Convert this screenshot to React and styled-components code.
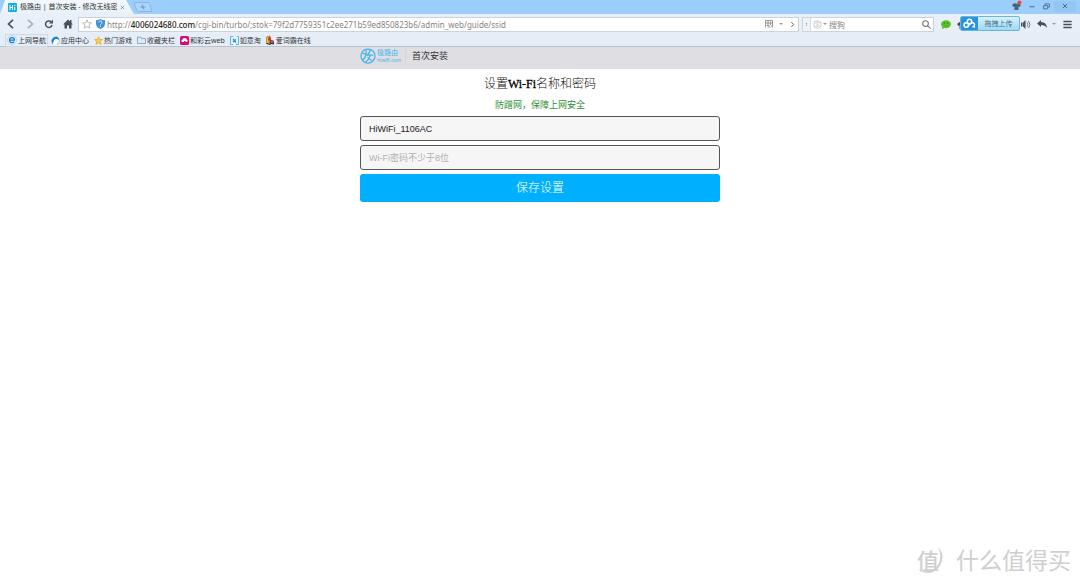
import styled, { createGlobalStyle } from 'styled-components';

const UI_FONT = "'Noto Sans', 'Noto Sans CJK SC', sans-serif";
const BODY_FONT = "'Liberation Sans', 'Noto Sans CJK SC', sans-serif";
const SERIF_FONT = "'Liberation Serif', 'Noto Sans CJK SC', serif";

const GlobalStyle = createGlobalStyle`
  * {
    box-sizing: border-box;
  }

  body {
    margin: 0;
    background: #fff;
    font-family: ${UI_FONT};
  }

  button,
  input {
    min-width: 0;
    margin: 0;
    padding: 0;
    border: 0;
    background: none;
    color: inherit;
    font-family: inherit;
  }

  svg {
    display: block;
    flex: none;
    overflow: visible;
  }
`;

const Page = styled.div`
  display: flex;
  flex-direction: column;
  min-height: 100vh;
`;

/* ---------- browser window ---------- */

const TitleBar = styled.div`
  display: flex;
  height: 14px;
  background: #9bcefb;
`;

const Tab = styled.div`
  display: flex;
  align-items: center;
  width: 134px;
  padding: 0 9px 0 8px;
  gap: 3px;
  background: linear-gradient(#f3f9fe, #e8f1f9);
  clip-path: polygon(5px 0, 126px 0, 100% 100%, 0 100%);
  color: #333;
  font-size: 7px;
  line-height: 14px;
`;

const TabTitle = styled.span`
  flex: 1;
  overflow: hidden;
  white-space: nowrap;
`;

const NewTab = styled.button`
  display: flex;
  align-items: center;
  justify-content: center;
  width: 16px;
  height: 10px;
  margin: 2px 0 0 1px;
  border: 1px solid #86b7e2;
  border-radius: 2px;
  background: #aad5fb;
  color: #6590b8;
  transform: skewX(20deg);
`;

const WindowButtons = styled.div`
  display: flex;
  align-items: center;
  height: 12px;
  margin-left: auto;
  padding-right: 4px;
  color: #4c6a88;
`;

const WindowButton = styled.button`
  display: flex;
  align-items: center;
  justify-content: center;
  width: ${({ $width }) => $width || 15}px;
  height: 11px;
  background: ${({ $shaded }) => ($shaded ? '#94c6f4' : 'none')};
`;

const Toolbar = styled.div`
  display: flex;
  align-items: center;
  height: 20px;
  padding: 0 2px 0 1px;
  background: linear-gradient(#e8f1f9, #e6eef7);
  color: #4a4f55;
`;

const ToolButton = styled.button`
  display: flex;
  align-items: center;
  justify-content: center;
  flex: none;
  width: ${({ $width }) => $width || 19}px;
  height: 16px;
  color: ${({ $muted }) => ($muted ? '#a9afb6' : 'inherit')};
`;

const AddressBar = styled.div`
  display: flex;
  align-items: center;
  flex: 1;
  min-width: 0;
  height: 15px;
  margin-left: 1px;
  border: 1px solid #ccd3db;
  background: #fff;
`;

const Address = styled.div`
  flex: 1;
  min-width: 0;
  overflow: hidden;
  padding-left: 1px;
  color: #858585;
  font-size: 8px;
  line-height: 13px;
  white-space: nowrap;

  b {
    color: #222;
    font-weight: 500;
  }
`;

const SearchBar = styled.label`
  display: flex;
  align-items: center;
  width: 132px;
  height: 15px;
  margin: 0 3px;
  border: 1px solid #ccd3db;
  background: #fff;
  color: #777;
`;

const SearchGrip = styled.span`
  display: flex;
  align-items: center;
  justify-content: center;
  width: 8px;
  height: 13px;
  border-right: 1px solid #d8dee5;
  background: #edf3f9;
`;

const SearchInput = styled.input`
  flex: 1;
  padding-left: 2px;
  font-size: 8px;
  line-height: 13px;

  &::placeholder {
    color: #888;
  }
`;

const UploadAnchor = styled.div`
  position: relative;
  width: 65px;
  height: 16px;
  padding: 5px 0 0 2px;
`;

const UploadButton = styled.button`
  position: absolute;
  top: 0;
  right: 0;
  display: flex;
  width: 60px;
  height: 15px;
  overflow: hidden;
  border: 1px solid #6bb4dc;
  border-radius: 2px;
  background: linear-gradient(#d8f1fb, #9fd8f2);
  color: #41718f;
  font-size: 7px;
  line-height: 13px;
`;

const UploadLogo = styled.span`
  display: flex;
  align-items: center;
  justify-content: center;
  width: 17px;
  height: 13px;
  background: #2795dd;
`;

const UploadText = styled.span`
  flex: 1;
`;

const Bookmarks = styled.nav`
  display: flex;
  align-items: center;
  height: 13px;
  padding: 0 6px;
  gap: 3px;
  border-bottom: 1px solid #b9c1c9;
  background: #e5eef7;
`;

const Bookmark = styled.a`
  display: flex;
  align-items: center;
  gap: 1px;
  padding: 0 1px;
  outline: ${({ $active }) => ($active ? '1px solid #d0dae4' : 'none')};
  color: #333;
  font-size: 7px;
  line-height: 11px;
  text-decoration: none;
  white-space: nowrap;
`;

/* ---------- router page ---------- */

const Header = styled.header`
  height: 22px;
  background: #dfdee3;
`;

const Column = styled.div`
  width: 100%;
  max-width: 360px;
  margin: 0 auto;
`;

const HeaderRow = styled(Column)`
  display: flex;
  align-items: center;
  height: 18px;
`;

const Brand = styled.a`
  display: flex;
  align-items: center;
  gap: 1px;
  padding-right: 4px;
  border-right: 1px solid #d5d5db;
  color: #42b6ea;
  text-decoration: none;
`;

const BrandName = styled.span`
  display: flex;
  flex-direction: column;
  font-size: 7px;
  line-height: 8px;

  small {
    font-size: 5px;
    line-height: 6px;
  }
`;

const HeaderTitle = styled.span`
  padding-left: 6px;
  color: #333;
  font-size: 9px;
  line-height: 18px;
`;

const Main = styled.main`
  flex: 1;
`;

const SetupForm = styled.form`
  display: flex;
  flex-direction: column;
  padding-top: 6px;
  text-align: center;
`;

const Title = styled.h1`
  margin: 0;
  color: #111;
  font-family: ${SERIF_FONT};
  font-size: 12px;
  font-weight: 300;
  line-height: 18px;
`;

const Latin = styled.span`
  color: #000;
  font-weight: 400;
  -webkit-text-stroke: 0.3px;
`;

const Hint = styled.p`
  margin: 3px 0 1px;
  color: #2f8f35;
  font-family: ${BODY_FONT};
  font-size: 9px;
  line-height: 19px;
`;

const Field = styled.input`
  height: 25px;
  margin-bottom: 4px;
  padding: 0 8px;
  border: 1px solid #555;
  border-radius: 3px;
  background: #f6f6f6;
  color: #222;
  font-family: ${BODY_FONT};
  font-size: 9px;

  &::placeholder {
    color: #b0b0b0;
  }
`;

const SaveButton = styled.button`
  height: 28px;
  padding-bottom: 2px;
  border-radius: 3px;
  background: #00b0ff;
  color: #fff;
  font-family: ${SERIF_FONT};
  font-size: 12px;
  font-weight: 300;
`;

const Watermark = styled.footer`
  display: flex;
  align-items: center;
  justify-content: flex-end;
  gap: 12px;
  padding: 0 9px 9px 0;
  color: #cfcfcf;
  font-family: 'Noto Sans CJK SC', sans-serif;
  font-size: 23px;
  line-height: 34px;
`;

const Seal = styled.span`
  position: relative;
  width: 30px;
  font-size: 22px;
  font-weight: 500;
  line-height: 30px;
  padding-left: 3px;

  svg {
    position: absolute;
    top: 0;
    left: 0;
  }
`;

/* ---------- icons ---------- */

const Stroke = ({ d, size = 10, width = 2 }) => (
  <svg
    width={size}
    height={size}
    viewBox="0 0 24 24"
    fill="none"
    stroke="currentColor"
    strokeWidth={width}
    aria-hidden="true"
  >
    <path d={d} />
  </svg>
);

const Star = ({ fill, stroke, size = 10 }) => (
  <svg width={size} height={size} viewBox="0 0 24 24" aria-hidden="true">
    <path
      d="M12 2l3 7 7.500.6-5.700 5 1.800 7.400-6.600-4-6.600 4 1.800-7.400-5.700-5L9 9z"
      fill={fill}
      stroke={stroke}
      strokeWidth="2"
      strokeLinejoin="round"
    />
  </svg>
);

const Caret = () => (
  <svg width="4" height="2" viewBox="0 0 4 2" aria-hidden="true">
    <path d="M0 0h4L2 2z" fill="#999" />
  </svg>
);

const SiteIcon = () => (
  <svg width="9" height="9" viewBox="0 0 18 18" aria-hidden="true">
    <rect width="18" height="18" rx="2" fill="#12b0e8" />
    <path
      d="M4 4v10M4 9h5M9 4v10M13.500 8v6M13.500 4v2"
      stroke="#fff"
      strokeWidth="2"
    />
  </svg>
);

const HomeIcon = () => (
  <svg width="10" height="10" viewBox="0 0 20 20" aria-hidden="true">
    <path
      d="M10 1L0 11h3v8h5v-6h4v6h5v-8h3l-3-3V2h-3v3z"
      fill="currentColor"
    />
  </svg>
);

const ReloadIcon = () => (
  <svg width="10" height="10" viewBox="0 0 20 20" aria-hidden="true">
    <path
      d="M16 12a6.500 6.500 0 1 1-2-6.500"
      fill="none"
      stroke="currentColor"
      strokeWidth="3"
    />
    <path d="M18 1v8h-8z" fill="currentColor" />
  </svg>
);

const ShieldIcon = () => (
  <svg width="9" height="10" viewBox="0 0 18 20" aria-hidden="true">
    <path d="M0 2q5 1 9-2 4 3 9 2v7q0 8-9 11-9-3-9-11z" fill="#3f93dd" />
    <path
      d="M6 7q0-3 3-3t3 3q0 2-3 4v2M9 14v2"
      stroke="#d8ecfb"
      strokeWidth="2"
      fill="none"
    />
  </svg>
);

const QrIcon = () => (
  <svg width="8" height="8" viewBox="0 0 16 16" aria-hidden="true">
    <path
      d="M1 15V1h14v14M4 4h4v4H4zM11 3v7M3 11h6M5 14h6M12 12h2M11 6h3"
      fill="none"
      stroke="#777"
      strokeWidth="1.500"
    />
  </svg>
);

const SogouIcon = () => (
  <svg width="9" height="9" viewBox="0 0 18 18" aria-hidden="true">
    <g fill="none" stroke="#b5b5b5" strokeWidth="1.500">
      <circle cx="9" cy="9" r="7.500" />
      <path d="M13 6q-7-2.500-7 1 0 1.500 3 2t3 2q0 3-7 1" />
    </g>
  </svg>
);

const WechatIcon = () => (
  <svg width="10" height="9" viewBox="0 0 20 18" aria-hidden="true">
    <path d="M3 13L2 18l5-2z" fill="#54b51f" />
    <ellipse cx="10" cy="8.500" rx="10" ry="8" fill="#5fc327" />
    <circle cx="6.500" cy="6" r="1.300" fill="#2d6b12" />
    <circle cx="13.500" cy="6" r="1.300" fill="#2d6b12" />
    <path d="M5 10q5 4 10 0" fill="none" stroke="#3d8a18" />
  </svg>
);

const ShirtIcon = ({ badge }) => (
  <svg width="9" height="8" viewBox="0 0 18 16" aria-hidden="true">
    <path
      d="M5 2q4 3 8 0l5 4-3 4-2-1v7H5V9l-2 1-3-4z"
      fill={badge ? '#4c6175' : '#4a4f55'}
    />
    {badge && <circle cx="15" cy="1" r="4" fill="#e8473f" />}
  </svg>
);

const CloudLogo = () => (
  <svg width="13" height="11" viewBox="0 0 26 22" aria-hidden="true">
    <g fill="none" stroke="#fff" strokeWidth="3">
      <circle cx="6.500" cy="14" r="4.500" />
      <circle cx="13" cy="7" r="4.500" />
      <path d="M10 16l5-5q6-4 8 2 0 4-4 5" />
    </g>
    <circle cx="23" cy="18" r="1.500" fill="#fff" />
  </svg>
);

const SpeakerIcon = () => (
  <svg width="10" height="9" viewBox="0 0 20 18" aria-hidden="true">
    <path d="M0 5h3v8H0zM4 5l5-5v18l-5-5z" fill="currentColor" />
    <path
      d="M12 5q3 4 0 8M15 2q6 7 0 14"
      fill="none"
      stroke="currentColor"
      strokeWidth="1.500"
    />
  </svg>
);

const UndoIcon = () => (
  <svg width="10" height="8" viewBox="0 0 20 16" aria-hidden="true">
    <path d="M8 0v4q11 0 12 12-4-6-12-6v4L0 7z" fill="currentColor" />
  </svg>
);

const BrowserIcon = () => (
  <svg width="10" height="10" viewBox="0 0 20 20" aria-hidden="true">
    <circle cx="10" cy="10" r="9" fill="#e3f2fd" stroke="#8fc3ea" />
    <path
      d="M5 10h10q0-5-5-5t-5 5 5 5q3 0 4.500-2"
      fill="none"
      stroke="#1a7ad0"
      strokeWidth="2.500"
    />
  </svg>
);

const AppCenterIcon = () => (
  <svg width="9" height="9" viewBox="0 0 18 18" aria-hidden="true">
    <circle cx="9" cy="9" r="8" fill="#fff" />
    <path
      d="M4 17Q-1 11 2 6t8-5q7 1 7 9-2-5-7-4-6 1-6 11z"
      fill="#1683d8"
    />
    <path d="M17 9q1 6-5 8" fill="none" stroke="#8fcdf5" strokeWidth="2" />
  </svg>
);

const FolderIcon = () => (
  <svg width="9" height="8" viewBox="0 0 18 16" aria-hidden="true">
    <path
      d="M1 14V2h6l2 3h8v10H1z"
      fill="#dcebf9"
      stroke="#6d93b8"
      strokeWidth="1.500"
    />
  </svg>
);

const CaiyunIcon = () => (
  <svg width="9" height="9" viewBox="0 0 18 18" aria-hidden="true">
    <rect width="18" height="18" rx="3" fill="#e0057d" />
    <path
      d="M4 12q-3-3 1-5 1-4 5-3 3 0 4 3 3 2 0 5h-3v-2H8v2z"
      fill="#fff"
    />
  </svg>
);

const RuyiIcon = () => (
  <svg width="9" height="9" viewBox="0 0 18 18" aria-hidden="true">
    <rect x="1" y="1" width="16" height="16" fill="#e6f4fd" />
    <path
      d="M6 1H1v16h5M12 17h5V1h-3"
      fill="none"
      stroke="#5cb3ec"
      strokeWidth="2"
    />
    <path
      d="M6 6l3 3 3-2M6 12l3-3 3 4"
      fill="none"
      stroke="#2b8fdc"
      strokeWidth="2.500"
    />
  </svg>
);

const DictIcon = () => (
  <svg width="9" height="10" viewBox="0 0 18 20" aria-hidden="true">
    <path d="M1 4l7-2v14l-7 1z" fill="#f3bf26" stroke="#6b4c1e" />
    <path d="M4 7q4-8 6 0v4H4z" fill="#d43332" />
    <path d="M8 9l8 3v7l-9-1z" fill="#343b77" />
    <circle cx="12" cy="13" r="3" fill="#e34a3d" />
    <path d="M1 17l8 2" stroke="#222" strokeWidth="2" />
  </svg>
);

const HiwifiLogo = () => (
  <svg width="16" height="16" viewBox="0 0 32 32" aria-hidden="true">
    <g fill="none" stroke="currentColor" strokeWidth="2.500">
      <circle cx="16" cy="16" r="14" />
      <path d="M5 10q5 3 9 1M12 4q2 11-6 20M20 4q0 5-5 10h12M20 14q-1 9-9 14M15 18q4 6 10 7" />
    </g>
  </svg>
);

const SealRing = () => (
  <svg width="30" height="30" viewBox="0 0 30 30" aria-hidden="true">
    <path
      d="M24 3q6 6 4 14-3 10-13 12-7 0-11-4 5 3 11 2 9-2 11-11 1-7-2-13z"
      fill="currentColor"
    />
  </svg>
);

const bookmarks = [
  { label: '上网导航', icon: <BrowserIcon />, active: true },
  { label: '应用中心', icon: <AppCenterIcon /> },
  { label: '热门游戏', icon: <Star fill="#ffd04a" stroke="#eea01c" size={9} /> },
  { label: '收藏夹栏', icon: <FolderIcon /> },
  { label: '和彩云web', icon: <CaiyunIcon /> },
  { label: '如意淘', icon: <RuyiIcon /> },
  { label: '爱词霸在线', icon: <DictIcon /> },
];

const BrowserChrome = () => (
  <>
    <TitleBar>
      <Tab>
        <SiteIcon />
        <TabTitle>极路由 | 首次安装 - 修改无线密码</TabTitle>
        <Stroke d="M4 4l16 16M20 4L4 20" size={5} />
      </Tab>
      <NewTab aria-label="新标签页">
        <Stroke d="M12 2v20M2 12h20" size={6} width={3} />
      </NewTab>
      <WindowButtons>
        <WindowButton aria-label="皮肤">
          <ShirtIcon badge />
        </WindowButton>
        <WindowButton aria-label="最小化">
          <Stroke d="M2 15h20" size={6} width={4} />
        </WindowButton>
        <WindowButton aria-label="还原">
          <Stroke d="M7 8V3h15v11h-5M2 9h14v11H2z" size={7} width={3} />
        </WindowButton>
        <WindowButton aria-label="关闭" $width={22} $shaded>
          <Stroke d="M4 4l16 16M20 4L4 20" size={6} width={4} />
        </WindowButton>
      </WindowButtons>
    </TitleBar>

    <Toolbar>
      <ToolButton aria-label="后退">
        <Stroke d="M17 2L6 12l11 10" width={4} />
      </ToolButton>
      <ToolButton aria-label="前进" $muted>
        <Stroke d="M7 2l11 10L7 22" width={4} />
      </ToolButton>
      <ToolButton aria-label="刷新">
        <ReloadIcon />
      </ToolButton>
      <ToolButton aria-label="主页">
        <HomeIcon />
      </ToolButton>
      <AddressBar>
        <ToolButton aria-label="收藏" $width={15}>
          <Star fill="none" stroke="#aaa" />
        </ToolButton>
        <ToolButton aria-label="网站信息" $width={12}>
          <ShieldIcon />
        </ToolButton>
        <Address>
          http://<b>4006024680.com</b>
          /cgi-bin/turbo/;stok=79f2d7759351c2ee271b59ed850823b6/admin_web/guide/ssid
        </Address>
        <ToolButton aria-label="二维码" $width={12}>
          <QrIcon />
        </ToolButton>
        <ToolButton aria-label="更多" $width={11}>
          <Caret />
        </ToolButton>
        <ToolButton aria-label="转到" $width={12}>
          <Stroke d="M8 4l8 8-8 8" size={7} width={3} />
        </ToolButton>
      </AddressBar>
      <SearchBar>
        <SearchGrip>
          <Stroke d="M12 4v5M12 13v5" size={5} width={4} />
        </SearchGrip>
        <ToolButton as="span" $width={12}>
          <SogouIcon />
        </ToolButton>
        <Caret />
        <SearchInput placeholder="搜狗" aria-label="搜狗" />
        <ToolButton as="span" $width={14}>
          <Stroke
            d="M17 9.500a7.500 7.500 0 1 1-15 0 7.500 7.500 0 0 1 15 0zM15 15l8 8"
            size={9}
            width={3}
          />
        </ToolButton>
      </SearchBar>
      <ToolButton aria-label="微信" $width={18}>
        <WechatIcon />
      </ToolButton>
      <UploadAnchor>
        <ShirtIcon />
        <UploadButton>
          <UploadLogo>
            <CloudLogo />
          </UploadLogo>
          <UploadText>拖拽上传</UploadText>
        </UploadButton>
      </UploadAnchor>
      <ToolButton aria-label="静音" $width={12}>
        <SpeakerIcon />
      </ToolButton>
      <ToolButton aria-label="撤销" $width={20}>
        <UndoIcon />
      </ToolButton>
      <Caret />
      <ToolButton aria-label="菜单" $width={22}>
        <Stroke d="M1 4h22M1 12h22M1 20h22" size={9} width={4} />
      </ToolButton>
    </Toolbar>

    <Bookmarks>
      {bookmarks.map(({ label, icon, active }) => (
        <Bookmark key={label} href="#" $active={active}>
          {icon}
          {label}
        </Bookmark>
      ))}
    </Bookmarks>
  </>
);

const WifiSetup = () => (
  <Column>
    <SetupForm>
      <Title>
        设置<Latin>Wi-Fi</Latin>名称和密码
      </Title>
      <Hint>防蹭网，保障上网安全</Hint>
      <Field aria-label="Wi-Fi名称" defaultValue="HiWiFi_1106AC" />
      <Field
        type="password"
        aria-label="Wi-Fi密码"
        placeholder="Wi-Fi密码不少于8位"
      />
      <SaveButton type="button">保存设置</SaveButton>
    </SetupForm>
  </Column>
);

export default function App() {
  return (
    <>
      <GlobalStyle />
      <Page>
        <BrowserChrome />
        <Header>
          <HeaderRow>
            <Brand href="#">
              <HiwifiLogo />
              <BrandName>
                极路由
                <small>hiwifi.com</small>
              </BrandName>
            </Brand>
            <HeaderTitle>首次安装</HeaderTitle>
          </HeaderRow>
        </Header>
        <Main>
          <WifiSetup />
        </Main>
        <Watermark>
          <Seal>
            值
            <SealRing />
          </Seal>
          什么值得买
        </Watermark>
      </Page>
    </>
  );
}
